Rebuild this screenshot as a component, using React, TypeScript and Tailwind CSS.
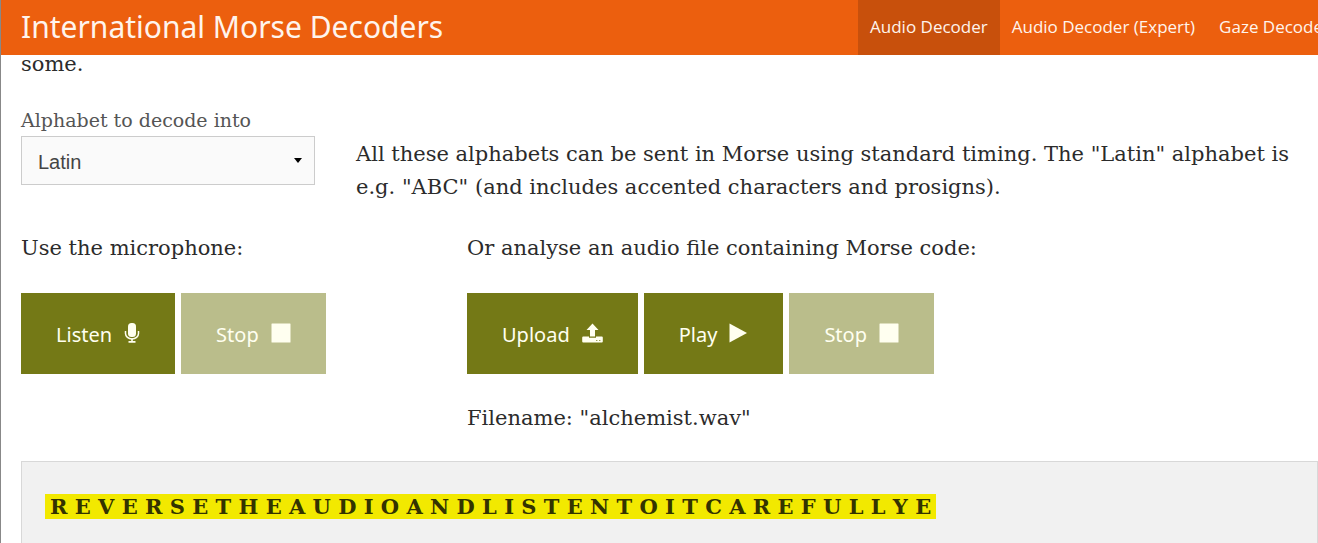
import React from "react";

const nav = [
  { label: "Audio Decoder", active: true },
  { label: "Audio Decoder (Expert)", active: false },
  { label: "Gaze Decoder", active: false },
];

const decoded = "R E V E R S E T H E A U D I O A N D L I S T E N T O I T C A R E F U L L Y E";

function MicIcon() {
  return (
    <svg viewBox="0 0 16 20" className="-mt-1 h-5 w-4" fill="currentColor" aria-hidden="true">
      <rect x="4" y="0" width="8" height="14" rx="3.5" />
      <path d="M1.500 8v2.500a6.500 5.500 0 0 0 13 0V8" fill="none" stroke="currentColor" strokeWidth="1.500" />
      <path d="M7.200 15.500h1.600v2.500h2.700v1.700h-7V18h2.700z" />
    </svg>
  );
}

function SquareIcon() {
  return (
    <svg viewBox="0 0 20 20" className="-mt-1 size-5" fill="currentColor" aria-hidden="true">
      <rect x="0.5" y="0.5" width="19" height="19" rx="0.5" />
    </svg>
  );
}

function UploadIcon() {
  return (
    <svg viewBox="0 0 21 20" className="-mt-1 h-5 w-[21px]" fill="currentColor" aria-hidden="true">
      <path d="M10.500 0.500L16.500 7h-3.500v6.500H8V7H4.500z" />
      <path
        fillRule="evenodd"
        d="M1.200 13.500H7v1.300h7v-1.300h5.800a1 1 0 0 1 1 1v4a1 1 0 0 1-1 1H1.200a1 1 0 0 1-1-1v-4a1 1 0 0 1 1-1zM14.300 17v1h1v-1zM17.300 17v1h1v-1z"
      />
    </svg>
  );
}

function PlayIcon() {
  return (
    <svg viewBox="0 0 19 20" className="-mt-1 h-5 w-[19px]" fill="currentColor" aria-hidden="true">
      <path d="M0.500 0.500L18 10L0.500 19.500z" />
    </svg>
  );
}

type ActionButtonProps = { label: string; disabled?: boolean; children: React.ReactNode };

function ActionButton({ label, disabled, children }: ActionButtonProps) {
  return (
    <button
      type="button"
      disabled={disabled}
      className="flex h-[81px] items-center gap-3 bg-[#747916] px-[35px] pt-[2px] font-['Noto_Sans',sans-serif] text-xl text-[#fffff0] disabled:bg-[#babd8b]"
    >
      {label}
      {children}
    </button>
  );
}

export default function App() {
  return (
    <div className="h-screen overflow-hidden border-l border-[#888] bg-white font-['DejaVu_Serif',serif] text-[21px] leading-[33px] text-[#2b2b2b]">
      <header className="flex h-[55px] items-center justify-between bg-[#ec5f0e] pl-5 font-['Noto_Sans',sans-serif] text-[#fff4ec]">
        <h1 className="pb-[2px] text-3xl whitespace-nowrap">International Morse Decoders</h1>
        <nav className="-mr-6 flex h-full font-['Open_Sans',sans-serif] text-[17px] whitespace-nowrap">
          {nav.map((item) => (
            <a
              key={item.label}
              href="#"
              className={
                item.active
                  ? "flex items-center bg-[#c8500c] px-3 pb-[2px]"
                  : "flex items-center px-3 pb-[2px]"
              }
            >
              {item.label}
            </a>
          ))}
        </nav>
      </header>

      <main className="-mt-[7px] pl-5">
        <p>some.</p>

        <section className="mt-[23px] grid grid-cols-[294px_1fr] gap-x-[41px]">
          <div>
            <label htmlFor="alphabet" className="block text-[19px] leading-8 text-[#555]">
              Alphabet to decode into
            </label>
            <div className="relative">
              <select
                id="alphabet"
                className="block h-[49px] w-full appearance-none border border-[#ccc] bg-[#fafafa] px-4 pt-[2px] font-['Liberation_Sans',sans-serif] text-xl text-[#444]"
              >
                <option>Latin</option>
              </select>
              <svg
                viewBox="0 0 8 5"
                className="pointer-events-none absolute top-[22px] right-[13px] h-[5px] w-2 text-black"
                fill="currentColor"
                aria-hidden="true"
              >
                <path d="M0 0h8L4 5z" />
              </svg>
            </div>
          </div>
          <p className="pt-[34px]">
            All these alphabets can be sent in Morse using standard timing. The "Latin" alphabet is e.g. "ABC" (and
            includes accented characters and prosigns).
          </p>
        </section>

        <section className="mt-7 grid grid-cols-[446px_1fr]">
          <div>
            <p>Use the microphone:</p>
            <div className="mt-7 flex gap-1.5">
              <ActionButton label="Listen">
                <MicIcon />
              </ActionButton>
              <ActionButton label="Stop" disabled>
                <SquareIcon />
              </ActionButton>
            </div>
          </div>
          <div>
            <p>Or analyse an audio file containing Morse code:</p>
            <div className="mt-7 flex gap-1.5">
              <ActionButton label="Upload">
                <UploadIcon />
              </ActionButton>
              <ActionButton label="Play">
                <PlayIcon />
              </ActionButton>
              <ActionButton label="Stop" disabled>
                <SquareIcon />
              </ActionButton>
            </div>
            <p className="mt-7">Filename: "alchemist.wav"</p>
          </div>
        </section>

        <section className="mt-[26px] border border-[#d8d8d8] bg-[#f1f1f1] px-[23px] py-7">
          <p className="font-bold whitespace-nowrap text-[#333300]">
            <mark className="bg-[#f2e900] px-[5px] text-inherit">{decoded}</mark>
          </p>
        </section>
      </main>
    </div>
  );
}
